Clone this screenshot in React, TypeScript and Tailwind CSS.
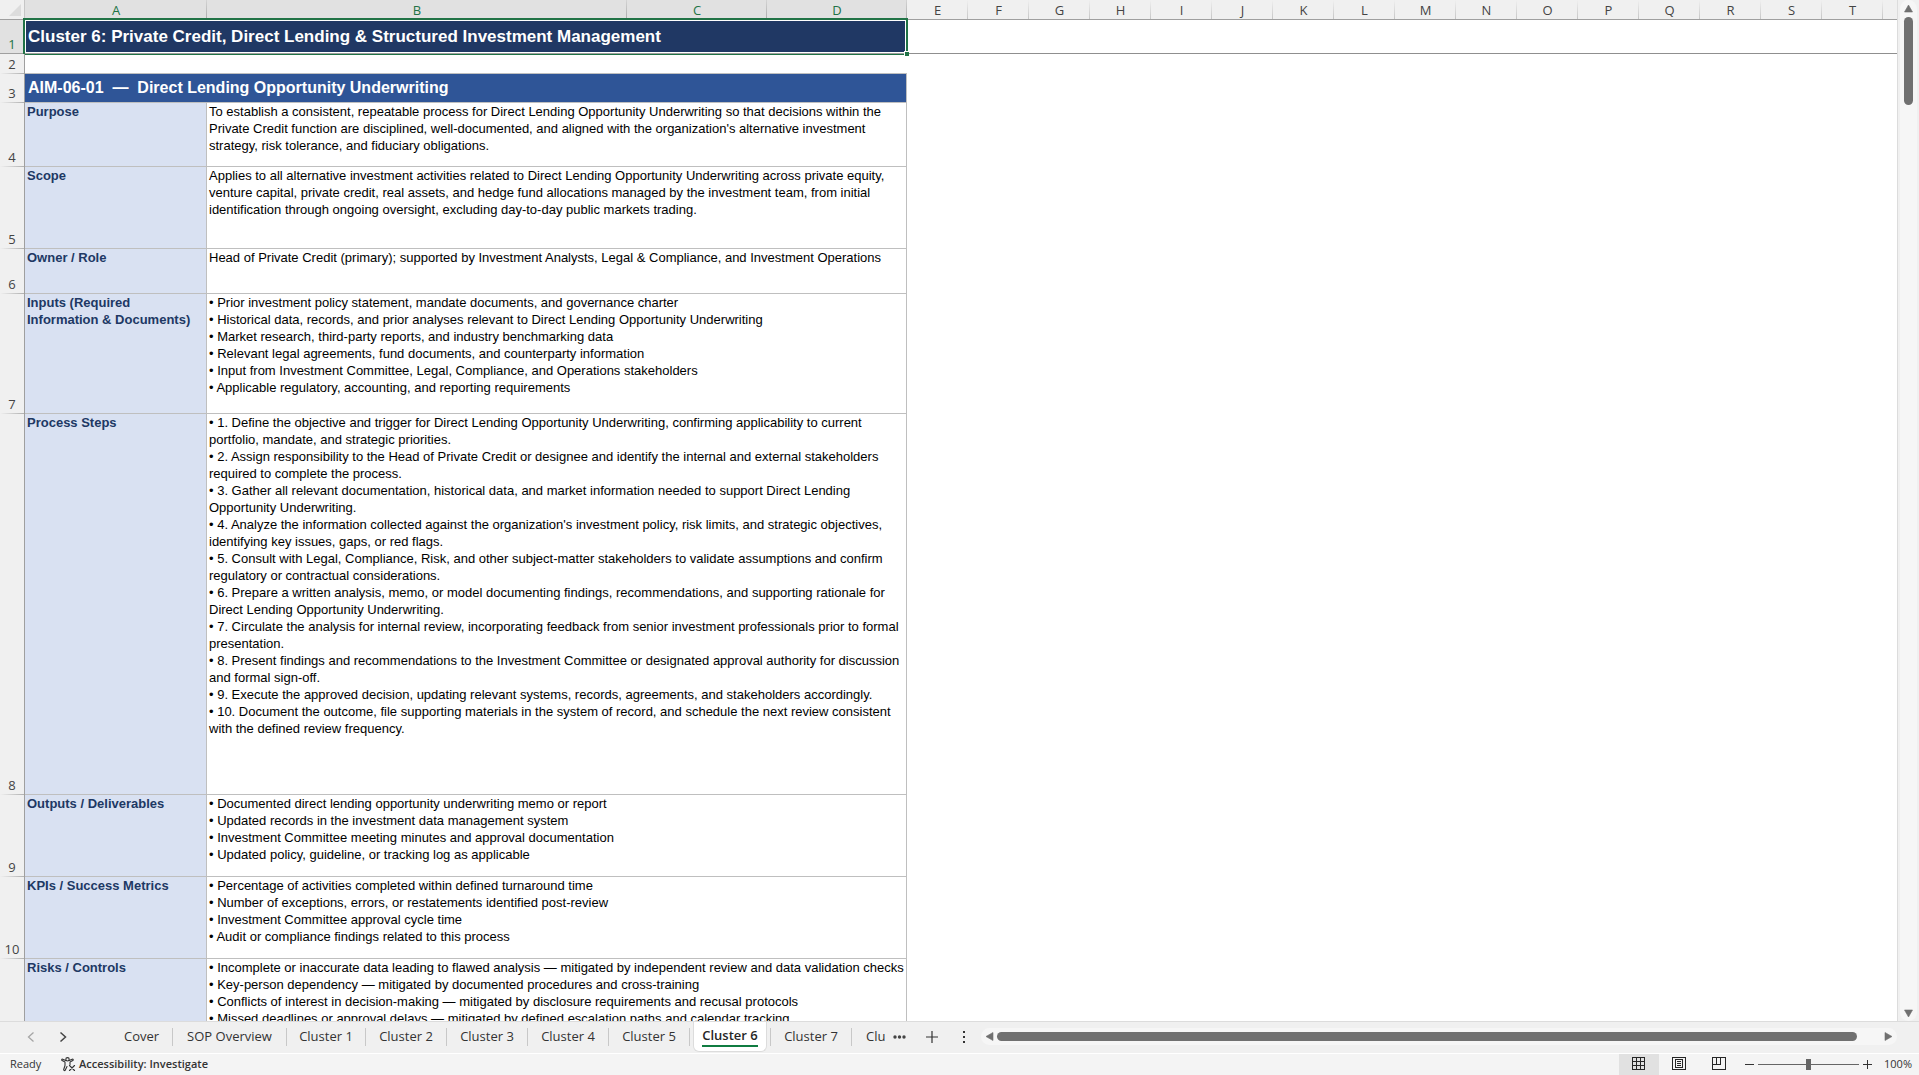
import type { ReactNode } from "react";

type Row = { n: number; height: string; label: string[]; lines: string[] };

const rows: Row[] = [
  {
    n: 4,
    height: "h-16",
    label: ["Purpose"],
    lines: [
      "To establish a consistent, repeatable process for Direct Lending Opportunity Underwriting so that decisions within the",
      "Private Credit function are disciplined, well-documented, and aligned with the organization's alternative investment",
      "strategy, risk tolerance, and fiduciary obligations.",
    ],
  },
  {
    n: 5,
    height: "h-[82px]",
    label: ["Scope"],
    lines: [
      "Applies to all alternative investment activities related to Direct Lending Opportunity Underwriting across private equity,",
      "venture capital, private credit, real assets, and hedge fund allocations managed by the investment team, from initial",
      "identification through ongoing oversight, excluding day-to-day public markets trading.",
    ],
  },
  {
    n: 6,
    height: "h-[45px]",
    label: ["Owner / Role"],
    lines: [
      "Head of Private Credit (primary); supported by Investment Analysts, Legal & Compliance, and Investment Operations",
    ],
  },
  {
    n: 7,
    height: "h-[120px]",
    label: ["Inputs (Required", "Information & Documents)"],
    lines: [
      "• Prior investment policy statement, mandate documents, and governance charter",
      "• Historical data, records, and prior analyses relevant to Direct Lending Opportunity Underwriting",
      "• Market research, third-party reports, and industry benchmarking data",
      "• Relevant legal agreements, fund documents, and counterparty information",
      "• Input from Investment Committee, Legal, Compliance, and Operations stakeholders",
      "• Applicable regulatory, accounting, and reporting requirements",
    ],
  },
  {
    n: 8,
    height: "h-[381px]",
    label: ["Process Steps"],
    lines: [
      "• 1. Define the objective and trigger for Direct Lending Opportunity Underwriting, confirming applicability to current",
      "portfolio, mandate, and strategic priorities.",
      "• 2. Assign responsibility to the Head of Private Credit or designee and identify the internal and external stakeholders",
      "required to complete the process.",
      "• 3. Gather all relevant documentation, historical data, and market information needed to support Direct Lending",
      "Opportunity Underwriting.",
      "• 4. Analyze the information collected against the organization's investment policy, risk limits, and strategic objectives,",
      "identifying key issues, gaps, or red flags.",
      "• 5. Consult with Legal, Compliance, Risk, and other subject-matter stakeholders to validate assumptions and confirm",
      "regulatory or contractual considerations.",
      "• 6. Prepare a written analysis, memo, or model documenting findings, recommendations, and supporting rationale for",
      "Direct Lending Opportunity Underwriting.",
      "• 7. Circulate the analysis for internal review, incorporating feedback from senior investment professionals prior to formal",
      "presentation.",
      "• 8. Present findings and recommendations to the Investment Committee or designated approval authority for discussion",
      "and formal sign-off.",
      "• 9. Execute the approved decision, updating relevant systems, records, agreements, and stakeholders accordingly.",
      "• 10. Document the outcome, file supporting materials in the system of record, and schedule the next review consistent",
      "with the defined review frequency.",
    ],
  },
  {
    n: 9,
    height: "h-[82px]",
    label: ["Outputs / Deliverables"],
    lines: [
      "• Documented direct lending opportunity underwriting memo or report",
      "• Updated records in the investment data management system",
      "• Investment Committee meeting minutes and approval documentation",
      "• Updated policy, guideline, or tracking log as applicable",
    ],
  },
  {
    n: 10,
    height: "h-[82px]",
    label: ["KPIs / Success Metrics"],
    lines: [
      "• Percentage of activities completed within defined turnaround time",
      "• Number of exceptions, errors, or restatements identified post-review",
      "• Investment Committee approval cycle time",
      "• Audit or compliance findings related to this process",
    ],
  },
  {
    n: 11,
    height: "h-[82px]",
    label: ["Risks / Controls"],
    lines: [
      "• Incomplete or inaccurate data leading to flawed analysis — mitigated by independent review and data validation checks",
      "• Key-person dependency — mitigated by documented procedures and cross-training",
      "• Conflicts of interest in decision-making — mitigated by disclosure requirements and recusal protocols",
      "• Missed deadlines or approval delays — mitigated by defined escalation paths and calendar tracking",
    ],
  },
];

const dataColumns = ["A", "B", "C", "D"];
const emptyColumns = "EFGHIJKLMNOPQRST".split("");

const tabs = [
  { name: "Cover", width: "w-[62px]" },
  { name: "SOP Overview", width: "w-[114px]" },
  { name: "Cluster 1", width: "w-[79px]" },
  { name: "Cluster 2", width: "w-[81px]" },
  { name: "Cluster 3", width: "w-[81px]" },
  { name: "Cluster 4", width: "w-[81px]" },
  { name: "Cluster 5", width: "w-[81px]" },
  { name: "Cluster 6", width: "w-[81px]" },
  { name: "Cluster 7", width: "w-[81px]" },
];

const ui = "font-['Open_Sans','Noto_Sans',sans-serif]";
const sheetFont = "font-['Liberation_Sans',Arial,sans-serif]";

function ColumnHead({ name, selected }: { name: string; selected?: boolean }) {
  return (
    <th
      scope="col"
      className={
        "relative h-5 border-b border-[#9f9f9f] p-0 pt-px text-center align-middle text-[13px] leading-4 font-normal " +
        (selected ? "bg-[#e1e1e1] text-[#217346]" : "bg-[#f0f0f0] text-[#444444]")
      }
    >
      {name}
      <span
        className={
          "absolute top-0 right-0 h-full w-px bg-linear-to-b " +
          (selected ? "from-[#d4d4d4] to-[#ababab]" : "from-[#f0f0f0] to-[#c6c6c6]")
        }
      />
    </th>
  );
}

function RowHead({ n, selected }: { n: number; selected?: boolean }) {
  return (
    <th
      scope="row"
      className={
        `relative border-r border-[#9f9f9f] p-0 text-center align-bottom text-[13px] leading-[19px] font-normal ${ui} ` +
        (selected ? "bg-[#e1e1e1] text-[#217346]" : "bg-[#f0f0f0] text-[#444444]")
      }
    >
      {n}
      <span
        className={
          "absolute bottom-0 left-0 h-px w-full " +
          (selected ? "bg-[#9f9f9f]" : "bg-linear-to-r from-[#f0f0f0] to-[#b0b0b0]")
        }
      />
    </th>
  );
}

function Lines({ lines }: { lines: string[] }) {
  return (
    <>
      {lines.map((line) => (
        <div key={line}>{line}</div>
      ))}
    </>
  );
}

function Sheet() {
  return (
    <table className="w-full table-fixed border-separate border-spacing-0">
      <colgroup>
        <col className="w-[25px]" />
        <col className="w-[182px]" />
        <col className="w-[420px]" />
        <col className="w-[140px]" />
        <col className="w-[140px]" />
        {emptyColumns.map((c) => (
          <col key={c} className="w-[61px]" />
        ))}
        <col />
      </colgroup>
      <thead>
        <tr className={ui}>
          <td className="h-5 border-b border-[#9f9f9f] bg-[#f0f0f0] p-0">
            <button aria-label="Select all" className="block h-[19px] w-full">
              <svg viewBox="0 0 25 19" className="block h-[19px] w-[25px]">
                <path d="M21 4v12H9z" fill="#dcdcdc" />
                <path d="M24.500 0v19" stroke="#c6c6c6" />
              </svg>
            </button>
          </td>
          {dataColumns.map((c) => (
            <ColumnHead key={c} name={c} selected />
          ))}
          {emptyColumns.map((c) => (
            <ColumnHead key={c} name={c} />
          ))}
          <td className="border-b border-[#9f9f9f] bg-[#f0f0f0] p-0" />
        </tr>
      </thead>
      <tbody>
        <tr>
          <RowHead n={1} selected />
          <td
            colSpan={4}
            className={`relative h-[34px] border-b border-[#9f9f9f] bg-[#203864] py-0 pr-0 pl-[3px] align-middle text-[17px] leading-5 font-bold whitespace-nowrap text-white ${sheetFont}`}
          >
            Cluster 6: Private Credit, Direct Lending &amp; Structured Investment Management
            <div className="pointer-events-none absolute -top-0.5 -right-px -bottom-0.5 -left-0.5 border-2 border-b border-[#217346] pb-px">
              <div className="h-full border border-white" />
            </div>
            <div className="absolute -right-0.5 -bottom-[3px] size-[5px] border-t border-l border-white bg-[#217346]" />
          </td>
          <td colSpan={17} className="border-b border-[#8f8f8f] p-0" />
        </tr>
        <tr>
          <RowHead n={2} />
          <td colSpan={4} className="h-5 border-b border-[#bfbfbf] p-0" />
          <td colSpan={17} className="p-0" />
        </tr>
        <tr>
          <RowHead n={3} />
          <td
            colSpan={4}
            className={`h-[29px] border-r border-b border-[#bfbfbf] bg-[#2f5597] py-0 pr-0 pl-[3px] align-middle text-base leading-5 font-bold whitespace-pre text-white ${sheetFont}`}
          >
            {"AIM-06-01  —  Direct Lending Opportunity Underwriting"}
          </td>
          <td colSpan={17} className="p-0" />
        </tr>
        {rows.map((r) => (
          <tr key={r.n}>
            <RowHead n={r.n} />
            <td
              className={`${r.height} border-r border-b border-[#bfbfbf] bg-[#d9e1f2] py-0 pr-0 pl-0.5 align-top text-[13px] leading-[17px] font-bold whitespace-nowrap text-[#203864] ${sheetFont}`}
            >
              <Lines lines={r.label} />
            </td>
            <td
              colSpan={3}
              className={`border-r border-b border-[#bfbfbf] py-0 pr-0 pl-0.5 align-top text-[13px] leading-[17px] whitespace-nowrap text-black ${sheetFont}`}
            >
              <Lines lines={r.lines} />
            </td>
            <td colSpan={17} className="p-0" />
          </tr>
        ))}
      </tbody>
    </table>
  );
}

function Arrow({ dir }: { dir: "up" | "down" | "left" | "right" }) {
  const d = {
    up: "M4.500 1 8.500 8h-8z",
    down: "M4.500 8 .5 1h8z",
    left: "M1 4.500 8 .5v8z",
    right: "M8 4.500 1 .5v8z",
  }[dir];
  return (
    <svg viewBox="0 0 9 9" className="size-[9px]">
      <path d={d} fill="#707070" stroke="#707070" strokeWidth=".6" strokeLinejoin="round" />
    </svg>
  );
}

function VerticalScroll() {
  return (
    <div className="flex w-[21px] shrink-0 justify-center bg-[#f0f0f0]">
      <div className="flex w-[17px] flex-col items-center rounded-full bg-[#f6f6f6]">
        <button aria-label="Scroll up" className="flex h-[17px] items-center">
          <Arrow dir="up" />
        </button>
        <div className="flex-1">
          <div className="h-[88px] w-[9px] rounded-full bg-[#707070]" />
        </div>
        <button aria-label="Scroll down" className="flex h-[15px] items-center">
          <Arrow dir="down" />
        </button>
      </div>
    </div>
  );
}

function TabBar() {
  return (
    <div className={`flex h-8 shrink-0 items-start border-t border-[#dcdcdc] bg-[#f0f0f0] text-[13px] text-[#333333] ${ui}`}>
      <div className="flex h-[30px] w-[111px] shrink-0 items-center gap-6 pl-[27px]">
        <button aria-label="Previous sheet">
          <svg viewBox="0 0 8 12" className="h-3 w-2" fill="none" stroke="#a6a6a6" strokeWidth="1.300">
            <path d="M6.500 1.500 1.500 6l5 4.500" />
          </svg>
        </button>
        <button aria-label="Next sheet">
          <svg viewBox="0 0 8 12" className="h-3 w-2" fill="none" stroke="#444" strokeWidth="1.500">
            <path d="M1.500 1.500 6.500 6l-5 4.500" />
          </svg>
        </button>
      </div>
      <div role="tablist" className="flex shrink-0">
        {tabs.map((t) =>
          t.name === "Cluster 6" ? (
            <button key={t.name} role="tab" aria-selected="true" className={`${t.width} flex h-[30px] items-center`}>
              <span className="flex h-[18px] w-full items-center justify-center border-r border-[#c8c8c8]">
                <span className="-my-2 flex h-[30px] w-[74px] shrink-0 justify-center rounded-b-md border border-t-0 border-[#dcdcdc] bg-white pt-1 font-semibold whitespace-nowrap text-[#262626]">
                  <span className="h-[21px] border-b-2 border-[#107c41] leading-[18px]">{t.name}</span>
                </span>
              </span>
            </button>
          ) : (
            <button key={t.name} role="tab" aria-selected="false" className={`${t.width} flex h-[30px] items-center`}>
              <span className="flex h-[18px] w-full items-center justify-center border-r border-[#c8c8c8] whitespace-nowrap">
                {t.name}
              </span>
            </button>
          ),
        )}
      </div>
      <div className="flex h-[30px] w-[129px] shrink-0 items-center pl-3.5">
        <button className="w-[27px] text-left">Clu</button>
        <button aria-label="More sheets">
          <svg viewBox="0 0 13 4" className="h-1 w-[13px]" fill="#444">
            <circle cx="2" cy="2" r="1.700" />
            <circle cx="6.500" cy="2" r="1.700" />
            <circle cx="11" cy="2" r="1.700" />
          </svg>
        </button>
        <button aria-label="New sheet" className="ml-5">
          <svg viewBox="0 0 12 12" className="size-3" stroke="#333" strokeWidth="1.200">
            <path d="M6 0v12M0 6h12" />
          </svg>
        </button>
        <div className="ml-6">
          <svg viewBox="0 0 4 12" className="h-3 w-1" fill="#333">
            <path d="M1 0h2v2H1zM1 5h2v2H1zM1 10h2v2H1z" />
          </svg>
        </div>
      </div>
      <div className="mt-1.5 mr-[22px] flex h-[17px] min-w-0 flex-1 items-center rounded-full bg-[#f6f6f6]">
        <button aria-label="Scroll left" className="flex w-4 justify-center">
          <Arrow dir="left" />
        </button>
        <div className="min-w-0 flex-1 pr-[27px]">
          <div className="h-[9px] rounded-full bg-[#707070]" />
        </div>
        <button aria-label="Scroll right" className="flex w-[13px] justify-start">
          <Arrow dir="right" />
        </button>
      </div>
    </div>
  );
}

function ViewButton({ label, active, children }: { label: string; active?: boolean; children: ReactNode }) {
  return (
    <button
      aria-label={label}
      aria-pressed={!!active}
      className={"flex h-full w-10 items-center justify-center pb-0.5 " + (active ? "bg-[#e1e1e1]" : "")}
    >
      <svg viewBox="0 0 14 13" className="h-[13px] w-3.5" fill="none" stroke="#262626" shapeRendering="crispEdges">
        {children}
      </svg>
    </button>
  );
}

function StatusBar() {
  return (
    <div className={`flex h-[22px] shrink-0 items-center border-t border-white bg-[#f4f4f4] text-[11px] text-[#333333] ${ui}`}>
      <span className="w-[61px] pl-2.5">Ready</span>
      <button className="flex items-center gap-[3px] font-semibold">
        <svg viewBox="0 0 15 15" className="size-[15px]" fill="none" stroke="#333" strokeWidth="1.100" strokeLinecap="round" strokeLinejoin="round">
          <circle cx="6.500" cy="2.300" r="1.700" />
          <path d="M4.800 3.500 1.700 2.200c-1-.3-1.500 1-.6 1.400L4 5v3.500l-1.300 4c-.2 1.200 1.200 1.500 1.600.5L6 9.500M8.200 3.500l3-1.300c1-.3 1.500 1 .6 1.400L9 5v2.500M8.500 8.500l5 5M13.500 8.500l-5 5" />
        </svg>
        Accessibility: Investigate
      </button>
      <div className="ml-auto flex h-full items-center">
        <ViewButton label="Normal" active>
          <path d="M.5.5h12v12H.5zM4.500.5v12M8.500.5v12M.5 4.500h12M.5 8.500h12" />
        </ViewButton>
        <ViewButton label="Page Layout">
          <path d="M.5.5h13v12H.5zM3.500 2.500h7v8h-7zM5 4.500h4M5 6.500h4M5 8.500h4" />
        </ViewButton>
        <ViewButton label="Page Break Preview">
          <path d="M.5.5h13v12H.5zM4.500.5v7M8.500.5v7M.5 7.500h8" />
        </ViewButton>
        <button aria-label="Zoom out" className="ml-1.5">
          <svg viewBox="0 0 9 9" className="size-[9px]" stroke="#333">
            <path d="M0 4.500h9" />
          </svg>
        </button>
        <input
          type="range"
          aria-label="Zoom"
          min={0}
          max={100}
          defaultValue={50}
          className="mx-1 h-[11px] w-[101px] appearance-none bg-[linear-gradient(#666,#666)] bg-[length:100%_1px] bg-center bg-no-repeat [&::-webkit-slider-thumb]:h-[11px] [&::-webkit-slider-thumb]:w-[5px] [&::-webkit-slider-thumb]:appearance-none [&::-webkit-slider-thumb]:bg-[#666666]"
        />
        <button aria-label="Zoom in">
          <svg viewBox="0 0 9 9" className="size-[9px]" stroke="#333">
            <path d="M0 4.500h9M4.500 0v9" />
          </svg>
        </button>
        <button className="w-[47px] pr-[7px] text-right">100%</button>
      </div>
    </div>
  );
}

export default function App() {
  return (
    <div className="flex h-screen flex-col overflow-hidden bg-[#f0f0f0]">
      <div className="flex min-h-0 flex-1">
        <div className="min-w-0 flex-1 overflow-hidden border-r border-[#dcdcdc] bg-white">
          <Sheet />
        </div>
        <VerticalScroll />
      </div>
      <TabBar />
      <StatusBar />
    </div>
  );
}
